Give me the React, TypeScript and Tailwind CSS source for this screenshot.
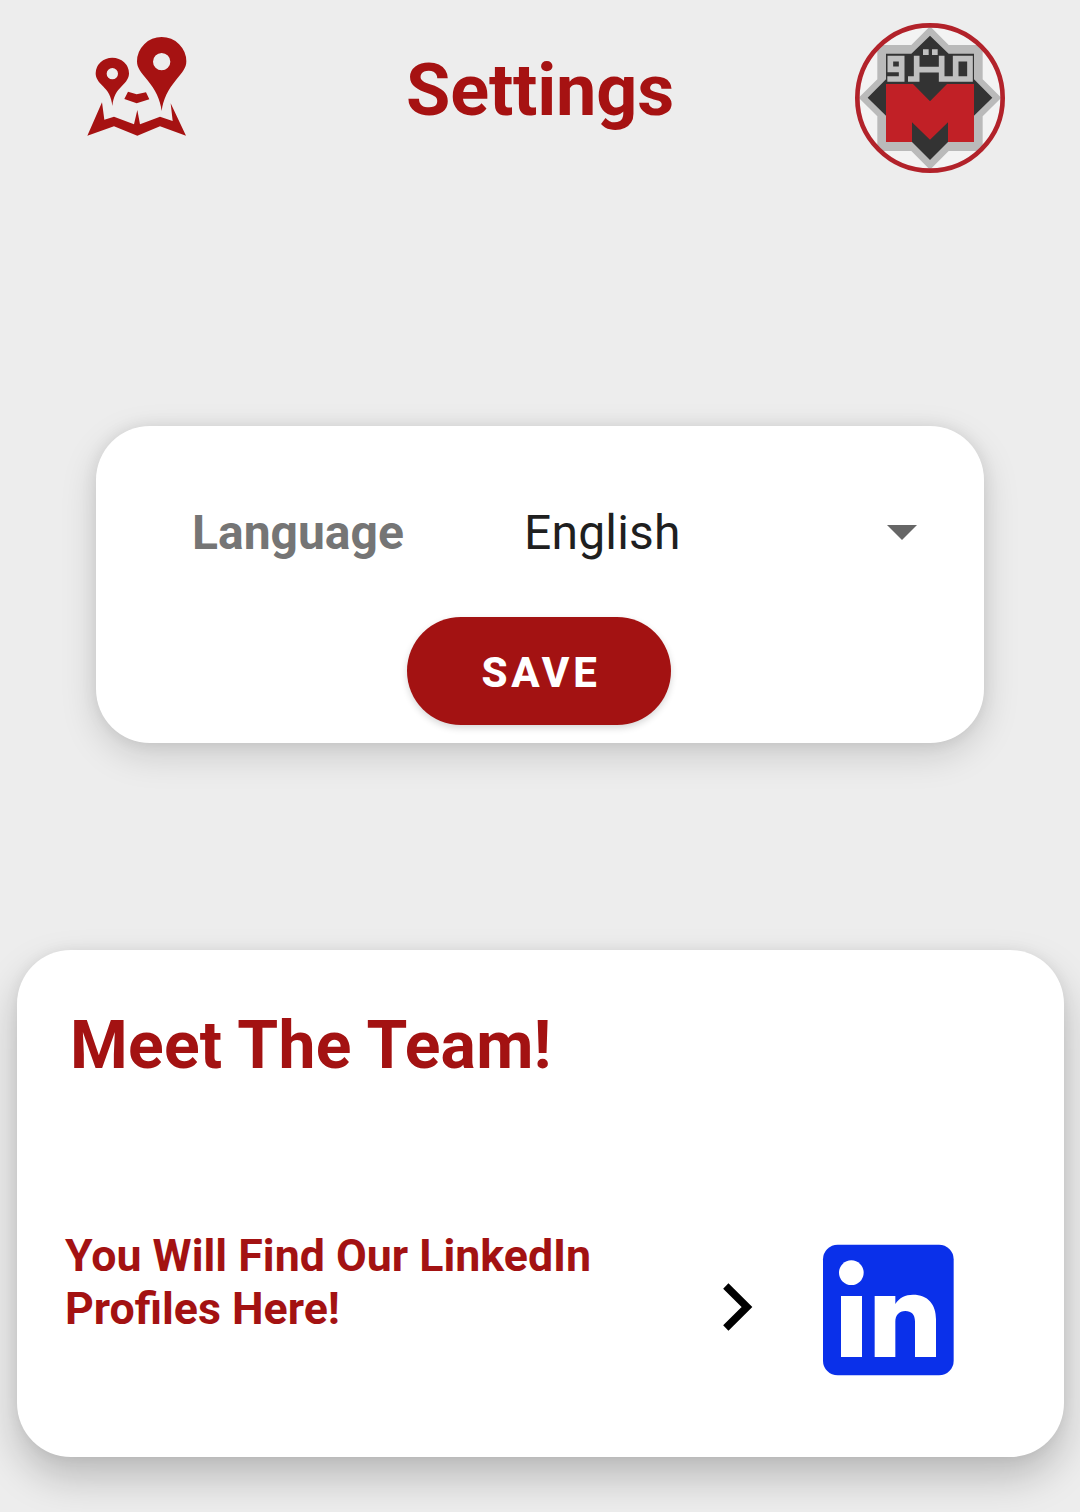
function MapLogo() {
  return (
    <svg className="h-[130px] w-[140px]" viewBox="0 0 420 390" fill="#a61212" aria-label="Map">
      <path fillRule="evenodd" d="M127 258C124 229 114 214 99 199C85 185 77 175 77 160A50 47 0 0 1 177 160C177 175 169 185 155 199C140 214 130 229 127 258ZM127 144a17 17 0 1 0 0 34a17 17 0 1 0 0-34Z" />
      <path fillRule="evenodd" d="M275 273C271 239 256 209 232 180C213 157 201 144 201 124A74 73 0 0 1 349 124C349 144 337 157 318 180C294 209 279 239 275 273ZM275 99a26 26 0 1 0 0 52a26 26 0 1 0 0-52Z" />
      <path d="M174 215L200 223L228 217L238 238L200 250L163 237Z" />
      <path d="M96 247L103 299L132 290L192 313L202 270L210 313L270 290L308 303L302 250L348 347L270 319L202 347L132 319L52 347Z" />
    </svg>
  );
}

function MetroLogo() {
  return (
    <svg className="h-[165px] w-[160px]" viewBox="0 0 480 495" aria-label="Metro">
      <circle cx="240" cy="249" r="218" fill="#f3f3f3" />
      <path
        fill="#bababa"
        d="M240 34L296 90H398V193L454 248L398 304V408H296L240 464L184 408H82V304L26 248L82 193V90H184Z"
      />
      <path
        fill="#333333"
        d="M240 62L296 116H372V193L427 248L372 302V381H294L240 435L186 381H108V302L53 248L108 193V116H184Z"
      />
      <path fill="#c12026" d="M108 207H189L240 259L291 207H372V381H294V322L240 374L186 322V381H108Z" />
      <g fill="none" stroke="#c0c0c0" strokeWidth="17">
        <path d="M160 163H121V131H155V192H112" />
        <path d="M174 192H200V122M200 164H275" />
        <path d="M275 122V192H360V131H317V192" />
      </g>
      <path fill="#c0c0c0" d="M219 103h17v17h-17zM246 103h17v17h-17z" />
      <circle cx="240" cy="249" r="218" fill="none" stroke="#b2222a" strokeWidth="14" />
    </svg>
  );
}

function LinkedInLogo() {
  return (
    <svg className="h-[132px] w-[132px]" viewBox="0 0 396 396" aria-label="LinkedIn">
      <rect x="3" y="2" width="392" height="392" rx="44" fill="#0a30ea" />
      <g fill="#ffffff">
        <circle cx="88" cy="86" r="37" />
        <path d="M57 156H120V339H57ZM158 156H220V180C232 161 250 152 273 152C318 152 342 181 342 226V339H279V232C279 211 268 201 250 201C231 201 220 213 220 234V339H158Z" />
      </g>
    </svg>
  );
}

export default function App() {
  return (
    <main className="flex h-[1512px] w-[1080px] flex-col items-center overflow-hidden bg-[#ededed] font-['Roboto',sans-serif]">
      <header className="flex h-[426px] w-full shrink-0 items-start justify-between pr-[70px] pl-[70px]">
        <div className="w-[160px] pt-5">
          <MapLogo />
        </div>
        <h1 className="pt-[49px] text-[72px] leading-[84px] font-bold tracking-[-0.2px] text-[#a61212]">Settings</h1>
        <div className="w-[160px] pt-[15px]">
          <MetroLogo />
        </div>
      </header>

      <section className="flex h-[317px] w-[888px] shrink-0 flex-col rounded-[54px] bg-white shadow-[0_12px_36px_rgba(0,0,0,0.15),0_0_16px_rgba(0,0,0,0.08)]">
        <div className="flex items-center pt-[79px] pr-[67px] pl-24 text-[48px] leading-[56px]">
          <span className="w-[332px] font-bold text-[#757575]">Language</span>
          <span className="grow tracking-[0.2px] text-[#1f1f1f]">English</span>
          <svg className="mb-[2px] h-[15px] w-[30px]" viewBox="0 0 30 15" fill="#666666">
            <path d="M0 0H30L15 15Z" />
          </svg>
        </div>
        <button className="mt-14 ml-[311px] h-[108px] w-[264px] rounded-full bg-[#a31212] pt-[2px] pl-1 text-[42px] leading-[49px] font-extrabold tracking-[3.75px] text-white shadow-[0_3px_7px_rgba(0,0,0,0.16)]">
          SAVE
        </button>
      </section>

      <section className="mt-[207px] ml-px h-[507px] w-[1047px] shrink-0 rounded-[54px] bg-white pt-[57px] pl-12 text-[#a31212] shadow-[0_20px_40px_rgba(0,0,0,0.22),0_0_14px_rgba(0,0,0,0.06)]">
        <h2 className="pl-[5px] text-[66px] leading-[77px] font-bold tracking-[0.25px]">Meet The Team!</h2>
        <div className="mt-[145px] flex items-start">
          <p className="mt-px w-[658px] text-[44.7px] leading-[53px] font-bold">
            You Will Find Our LinkedIn
            <br />
            Profiles Here!
          </p>
          <svg className="mt-[54px] h-12 w-[30px]" viewBox="0 0 30 48" fill="none" stroke="#000000" strokeWidth="7.5">
            <path d="M2.8 3L24 24L2.8 45" />
          </svg>
          <div className="mt-[15px] ml-[69px]">
            <LinkedInLogo />
          </div>
        </div>
      </section>
    </main>
  );
}
